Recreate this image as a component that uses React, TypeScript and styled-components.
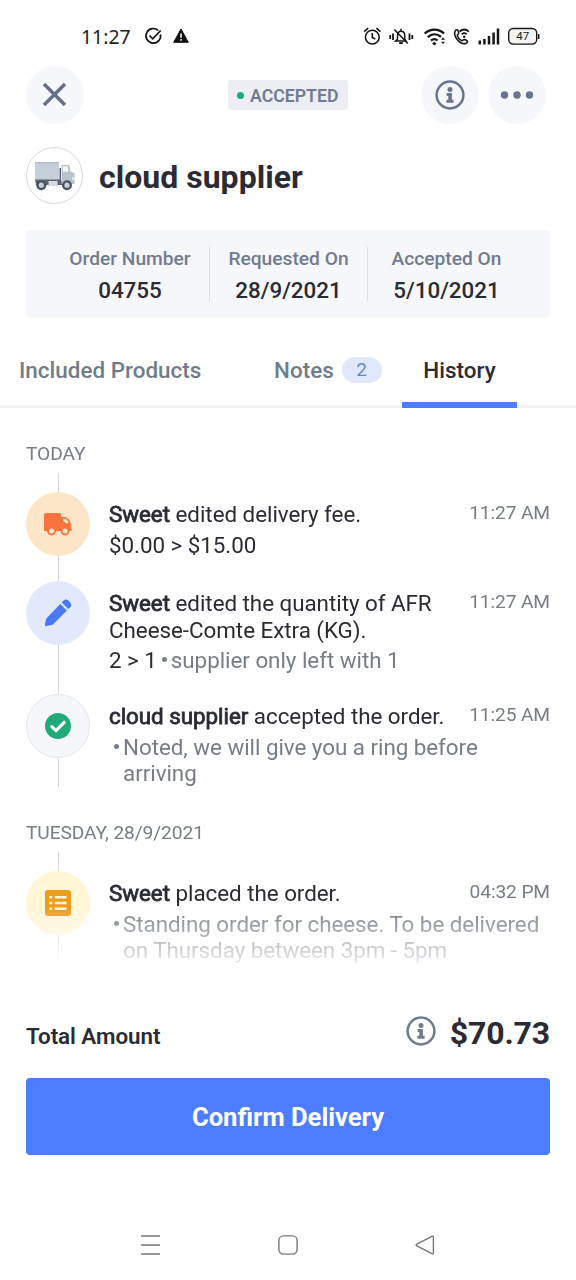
import React from 'react';
import styled, { createGlobalStyle } from 'styled-components';

const GlobalStyle = createGlobalStyle`
  * { box-sizing: border-box; }
  body {
    margin: 0;
    background: #fff;
    font-family: Roboto, "Liberation Sans", sans-serif;
    color: #2a2b35;
  }
  svg { display: block; flex: none; }
`;

const Screen = styled.div`
  width: 576px;
  height: 1280px;
  display: flex;
  flex-direction: column;
  background: #fff;
  overflow: hidden;
  white-space: nowrap;
`;

const StatusBar = styled.div`
  height: 66px;
  padding: 0 36px 0 81px;
  display: flex;
  align-items: flex-start;
  justify-content: space-between;
`;

const StatusGroup = styled.div`
  height: 72px;
  display: flex;
  align-items: center;
`;

const Clock = styled.span`
  font-family: "Noto Sans", sans-serif;
  font-size: 19.4px;
  color: #222;
  width: 63px;
`;

const Header = styled.header`
  height: 58px;
  padding: 0 30px 0 26px;
  display: grid;
  grid-template-columns: 1fr 120px 1fr;
  align-items: center;
`;

const HeaderActions = styled.div`
  display: flex;
  justify-content: flex-end;
  gap: 9px;
  margin-left: 20px;
`;

const RoundButton = styled.button`
  width: 58px;
  height: 58px;
  padding: 0 1px 1px 0;
  border: 0;
  border-radius: 50%;
  background: #f6f7fb;
  display: flex;
  align-items: center;
  justify-content: center;
`;

const StatusBadge = styled.div`
  width: 120px;
  height: 30px;
  margin-left: 2px;
  border-radius: 3px;
  background: #eceef3;
  color: #717b91;
  display: flex;
  align-items: center;
  padding: 1px 0 0 9px;
  font-size: 17.7px;
  font-weight: 600;
`;

const Dot = styled.span`
  width: 7px;
  height: 7px;
  border-radius: 50%;
  background: #1fa97c;
  margin-right: 6px;
`;

const Supplier = styled.div`
  margin-top: 23px;
  padding-left: 26px;
  display: flex;
  align-items: center;
  gap: 16px;
`;

const Avatar = styled.div`
  width: 57px;
  height: 57px;
  border: 1px solid #d8d8dc;
  border-radius: 50%;
  display: flex;
  align-items: center;
  justify-content: center;
`;

const SupplierName = styled.h1`
  margin: 2px 0 0;
  font-size: 32px;
  line-height: 40px;
  font-weight: 700;
  letter-spacing: 0.02px;
`;

const Summary = styled.div`
  margin: 26px 26px 0;
  height: 88px;
  padding: 17px 25px;
  border-radius: 4px;
  background: #f5f7fa;
  display: grid;
  grid-template-columns: repeat(3, 1fr);
`;

const SummaryCell = styled.div`
  height: 54px;
  display: flex;
  flex-direction: column;
  align-items: center;
  & + & { border-left: 1px solid #dcdfe6; }
`;

const SummaryLabel = styled.span`
  font-size: 19.2px;
  line-height: 23px;
  font-weight: 500;
  color: #727b8f;
`;

const SummaryValue = styled.span`
  margin-top: 6px;
  font-size: 22.4px;
  line-height: 28px;
  font-weight: 500;
`;

const Tabs = styled.nav`
  height: 90px;
  display: flex;
  align-items: flex-end;
  padding-left: 19px;
  box-shadow: inset 0 -3px #f3f4f6;
`;

const Tab = styled.div<{ $width: number; $active?: boolean }>`
  width: ${(p) => p.$width}px;
  height: 77px;
  display: flex;
  align-items: center;
  justify-content: ${(p) => (p.$active ? 'center' : 'flex-start')};
  padding-top: ${(p) => (p.$active ? 6 : 0)}px;
  border-bottom: ${(p) => (p.$active ? '6px solid #4c7dfb' : '0')};
  font-size: 22.4px;
  font-weight: 500;
  letter-spacing: 0.03px;
  color: ${(p) => (p.$active ? '#2a2b35' : '#717c8b')};
`;

const Count = styled.span`
  width: 40px;
  height: 26px;
  margin-left: 8px;
  border-radius: 13px;
  background: #e1e8fc;
  color: #6389d0;
  font-size: 19.2px;
  font-weight: 400;
  display: flex;
  align-items: center;
  justify-content: center;
`;

const History = styled.main`
  height: 557px;
  padding: 34px 26px 0;
  overflow: hidden;
  mask-image: linear-gradient(#000 500px, transparent 566px);
`;

const DayLabel = styled.div`
  height: 31px;
  line-height: 24px;
  font-size: 19.2px;
  letter-spacing: -0.1px;
  color: #777d88;
`;

const Timeline = styled.div`
  padding-top: 19px;
  margin-bottom: 34px;
  background: linear-gradient(#d6d9df, #d6d9df) 32px 0 / 1px 100% no-repeat;
`;

const Entry = styled.div<{ $height: number }>`
  height: ${(p) => p.$height}px;
  display: flex;
  gap: 19px;
`;

const EntryIcon = styled.div<{ $bg: string; $border?: string }>`
  flex: none;
  width: 64px;
  height: 64px;
  padding-right: 1px;
  border-radius: 50%;
  background: ${(p) => p.$bg};
  border: 1px solid ${(p) => p.$border ?? p.$bg};
  display: flex;
  align-items: center;
  justify-content: center;
`;

const EntryBody = styled.div`
  flex: 1;
  padding-top: 9.4px;
  font-size: 22.4px;
  line-height: 26.3px;
  letter-spacing: -0.04px;
`;

const EntryHead = styled.div`
  display: flex;
  justify-content: space-between;
`;

const Actor = styled.span`
  -webkit-text-stroke: 0.8px currentColor;
`;

const Time = styled.time`
  font-size: 19.2px;
  line-height: 23px;
  letter-spacing: -0.12px;
  color: #777d88;
`;

const Detail = styled.div`
  margin-top: 4px;
  display: flex;
  align-items: flex-start;
`;

const Comment = styled.span`
  color: #777d88;
  display: flex;
  &::before {
    content: "";
    width: 5px;
    height: 5px;
    margin: 10px 4px 0 5px;
    border-radius: 50%;
    background: #777d88;
  }
`;

const Total = styled.div`
  height: 113px;
  padding: 45px 26px 0;
  display: flex;
  align-items: flex-start;
`;

const TotalLabel = styled.span`
  flex: 1;
  margin-top: 12px;
  font-size: 22.4px;
  line-height: 28px;
  font-weight: 600;
  letter-spacing: -0.05px;
`;

const TotalValue = styled.span`
  margin: 3px 0 0 14px;
  font-size: 32px;
  line-height: 40px;
  font-weight: 700;
  letter-spacing: -0.15px;
`;

const InfoSlot = styled.span`
  margin-top: 6px;
`;

const Confirm = styled.button`
  margin: 0 26px;
  height: 77px;
  border: 0;
  border-radius: 4px;
  background: #4c7dfe;
  color: #fff;
  font: 700 25.6px Roboto, "Liberation Sans", sans-serif;
`;

const SystemNav = styled.div`
  margin-top: 75px;
  padding: 0 141px 0 140px;
  height: 30px;
  display: flex;
  align-items: center;
  justify-content: space-between;
`;

const InfoIcon = ({ color }: { color: string }) => (
  <svg width="30" height="30" viewBox="0 0 30 30">
    <circle cx="15" cy="15" r="13.4" fill="none" stroke={color} strokeWidth="2.5" />
    <circle cx="15" cy="9.4" r="2.5" fill={color} />
    <path d="M11.6 13h5.3v6.800h1.700v2.900h-7.200v-2.900h1.900v-3.900h-1.700z" fill={color} />
  </svg>
);

const StatusLeftIcons = () => (
  <svg width="48" height="20" viewBox="0 0 48 20" fill="none" stroke="#111" strokeWidth="1.7">
    <path d="M14.3 4.5A7.3 7.3 0 1 0 16.500 8.500" />
    <path d="M5.500 9.500l3.200 3.300 8-8.300" />
    <path d="M37 3l7.300 13.300H29.700z" fill="#111" stroke="#111" strokeWidth="1" strokeLinejoin="round" />
    <path d="M37 7.400v4.300M37 13v1.800" stroke="#fff" strokeWidth="1.500" />
  </svg>
);

const StatusRightIcons = () => (
  <svg width="178" height="24" viewBox="362 24.500 178 24" fill="none" stroke="#161616" strokeWidth="1.600">
    <circle cx="372.300" cy="37.600" r="6.900" />
    <path d="M372.300 33.500v4.500l3 1.500M364.200 32.200l4-3.600M380.400 32.200l-4-3.600" />
    <path d="M390.200 35.500v4M393 34v6.500M409.500 34v6.500M412.300 35.500v4" strokeWidth="1.800" />
    <path d="M395.500 41.500h10.500l-1.300-2.200v-3.200c0-5.800-7.200-5.800-7.200 0v3.600zM401 29.300v2.200M394.300 30l13.500 14" strokeWidth="1.500" />
    <path d="M399.200 43.600h3.600" strokeWidth="2" />
    <path d="M424.700 34c5.800-5.200 13.700-5.200 19.400 0M427.800 37.600c4-3.500 9.300-3.500 13.200-.2M431 41c2.200-1.800 4.500-1.800 6.600 0" strokeWidth="2.300" />
    <path d="M434.300 42.200l2.200 1.700-2.200 2.100-2.200-2.100z" fill="#161616" stroke="none" />
    <path d="M441 40.200l2-2.400 2 2.400zM441 42.200l2 2.400 2-2.400z" fill="#161616" stroke="none" />
    <path d="M455.200 31.400c1-1.500 2.500-1.500 3 .2l.5 2c.1 1-1.700 1.400-1.400 2.500.7 2.400 2.200 4 4.300 5 1.200.4 1.700-1.400 2.800-1.100l2 .7c1.500.6 1.200 2.100-.2 3-5.700 2.500-13.500-6.800-11-12.300z" strokeWidth="1.600" />
    <path d="M459.500 32.200c3-2.800 6.400-2.800 9.400 0M461.700 34.800c1.700-1.500 3.400-1.500 5 0" strokeWidth="1.700" />
    <circle cx="464.200" cy="37.200" r="1.200" fill="#161616" stroke="none" />
    <path d="M479.800 41v4M484.400 39.500v5.500M489 36.500v8.500M493.600 33v12M498 29v16" strokeWidth="2.500" />
    <rect x="508.700" y="29" width="28" height="15.600" rx="4.500" fill="#f5f5f5" strokeWidth="1.400" />
    <path d="M538.700 34.500v5" strokeWidth="1.500" />
    <text x="522.700" y="40.900" textAnchor="middle" fill="#222" stroke="none" fontSize="11.500" fontFamily="Roboto, sans-serif">47</text>
  </svg>
);

const TruckPicture = () => (
  <svg width="42" height="32" viewBox="0 0 42 32">
    <path d="M1 2h24v18H1z" fill="#c6cfd8" />
    <path d="M1 2h24v1.300H1z" fill="#b3bec8" />
    <path d="M1 19.500h24.500V8H27v13h3v4H2z" fill="#596371" />
    <path d="M27.500 5h6.500c1 0 1.500.5 1.700 1.500l1 5 2.800 1.200c.7.300 1 .8 1 1.500V24h-13z" fill="#b8c3ce" />
    <path d="M28.800 6.200h4.900l.9 5.600h-5.800z" fill="#f2f5f8" />
    <path d="M14.500 21h9v5h-9z" fill="#d5dbe0" />
    <path d="M38 17h2.500v3H38z" fill="#e3e7eb" />
    <circle cx="7.300" cy="25.200" r="5" fill="#4b5562" />
    <circle cx="7.300" cy="25.200" r="2.600" fill="#c4ccd4" />
    <circle cx="33" cy="25.200" r="5" fill="#4b5562" />
    <circle cx="33" cy="25.200" r="2.600" fill="#c4ccd4" />
  </svg>
);

const VanIcon = () => (
  <svg width="30" height="24" viewBox="0 0 30 24">
    <path d="M3.200 1H16.500c1 0 1.700.6 1.700 1.500V5h3c2.800 0 4.200 1.400 5.300 3.600l1.100 2.600c.2.500.3.900.3 1.400v4.900h.9V19H1V3.200C1 1.800 1.800 1 3.200 1z" fill="#fa733e" />
    <path d="M19.800 6.800h1.700c1.700 0 2.500.8 3.200 2.200l.9 2-2 .5-3.800-2.700z" fill="#fde5c8" />
    <circle cx="8.500" cy="19" r="3.500" fill="#fde5c8" stroke="#fa733e" strokeWidth="1.900" />
    <circle cx="22" cy="19" r="3.500" fill="#fde5c8" stroke="#fa733e" strokeWidth="1.900" />
  </svg>
);

const PencilIcon = () => (
  <svg width="30" height="30" viewBox="0 0 30 30" fill="#4a79f2">
    <path d="M17.300 5.900l6.600 6.600L10.200 26.300c-.5.500-.9.700-1.500.8l-5.300 1c-1 .2-1.600-.4-1.400-1.400l1-5.300c.1-.6.400-1 .8-1.500z" />
    <path d="M18.700 4.500l1.900-1.900c1.500-1.500 3.300-1.500 4.800 0l1.800 1.800c1.500 1.500 1.500 3.300 0 4.800l-1.900 1.900z" />
  </svg>
);

const CheckIcon = () => (
  <svg width="26" height="26" viewBox="0 0 26 26">
    <circle cx="13" cy="13" r="13" fill="#1faa78" />
    <path d="M6.800 13.600l4.200 4 8.200-8.300" fill="none" stroke="#fff" strokeWidth="3.200" strokeLinecap="round" />
  </svg>
);

const ListIcon = () => (
  <svg width="26" height="26" viewBox="0 0 26 26">
    <rect width="26" height="26" rx="3" fill="#ee9d1b" />
    <path d="M4.300 7.300h3M9.800 7.300h11.700M4.300 13h3M9.800 13h11.700M4.300 18.700h3M9.800 18.700h11.700" stroke="#fff8df" strokeWidth="2.400" />
  </svg>
);

type EntryProps = {
  height: number;
  bg: string;
  border?: string;
  icon: React.ReactNode;
  actor: string;
  action: React.ReactNode;
  time: string;
  change?: string;
  comment?: React.ReactNode;
};

const HistoryEntry = ({ height, bg, border, icon, actor, action, time, change, comment }: EntryProps) => (
  <Entry $height={height}>
    <EntryIcon $bg={bg} $border={border}>{icon}</EntryIcon>
    <EntryBody>
      <EntryHead>
        <span><Actor>{actor}</Actor> {action}</span>
        <Time>{time}</Time>
      </EntryHead>
      <Detail>
        {change}
        {comment && <Comment><span>{comment}</span></Comment>}
      </Detail>
    </EntryBody>
  </Entry>
);

const summary = [
  ['Order Number', '04755'],
  ['Requested On', '28/9/2021'],
  ['Accepted On', '5/10/2021'],
];

export default function App() {
  return (
    <Screen>
      <GlobalStyle />
      <StatusBar>
        <StatusGroup>
          <Clock>11:27</Clock>
          <StatusLeftIcons />
        </StatusGroup>
        <StatusGroup><StatusRightIcons /></StatusGroup>
      </StatusBar>
      <Header>
        <RoundButton aria-label="Close">
          <svg width="25" height="25" viewBox="0 0 25 25" stroke="#65718c" strokeWidth="3.500">
            <path d="M2 2l21 21M23 2L2 23" />
          </svg>
        </RoundButton>
        <StatusBadge><Dot />ACCEPTED</StatusBadge>
        <HeaderActions>
          <RoundButton aria-label="Details"><InfoIcon color="#69748f" /></RoundButton>
          <RoundButton aria-label="More">
            <svg width="34" height="8" viewBox="0 0 34 8" fill="#69748f">
              <circle cx="4.500" cy="4" r="3.700" />
              <circle cx="17" cy="4" r="3.700" />
              <circle cx="29.500" cy="4" r="3.700" />
            </svg>
          </RoundButton>
        </HeaderActions>
      </Header>
      <Supplier>
        <Avatar><TruckPicture /></Avatar>
        <SupplierName>cloud supplier</SupplierName>
      </Supplier>
      <Summary>
        {summary.map(([label, value]) => (
          <SummaryCell key={label}>
            <SummaryLabel>{label}</SummaryLabel>
            <SummaryValue>{value}</SummaryValue>
          </SummaryCell>
        ))}
      </Summary>
      <Tabs>
        <Tab $width={255}>Included Products</Tab>
        <Tab $width={128}>Notes<Count>2</Count></Tab>
        <Tab $width={115} $active>History</Tab>
      </Tabs>
      <History>
        <DayLabel>TODAY</DayLabel>
        <Timeline>
          <HistoryEntry height={89} bg="#fde5c8" icon={<VanIcon />} actor="Sweet" action="edited delivery fee." time="11:27 AM" change="$0.00 > $15.00" />
          <HistoryEntry height={113} bg="#e2e9fc" icon={<PencilIcon />} actor="Sweet" action={<>edited the quantity of AFR<br />Cheese-Comte Extra (KG).</>} time="11:27 AM" change="2 > 1" comment="supplier only left with 1" />
          <HistoryEntry height={93} bg="#f5f7fa" border="#e3e6ec" icon={<CheckIcon />} actor="cloud supplier" action="accepted the order." time="11:25 AM" comment={<>Noted, we will give you a ring before<br />arriving</>} />
        </Timeline>
        <DayLabel>TUESDAY, 28/9/2021</DayLabel>
        <Timeline>
          <HistoryEntry height={93} bg="#fff6d6" icon={<ListIcon />} actor="Sweet" action="placed the order." time="04:32 PM" comment={<>Standing order for cheese. To be delivered<br />on Thursday between 3pm - 5pm</>} />
        </Timeline>
      </History>
      <Total>
        <TotalLabel>Total Amount</TotalLabel>
        <InfoSlot><InfoIcon color="#717b8d" /></InfoSlot>
        <TotalValue>$70.73</TotalValue>
      </Total>
      <Confirm>Confirm Delivery</Confirm>
      <SystemNav>
        <svg width="21" height="22" viewBox="0 0 21 22" stroke="#777" strokeWidth="1.500">
          <path d="M1 2h19M1 11h19M1 20h19" />
        </svg>
        <svg width="20" height="20" viewBox="0 0 20 20" fill="none" stroke="#777" strokeWidth="1.400">
          <rect x=".9" y=".9" width="18.200" height="18.200" rx="4.500" />
        </svg>
        <svg width="20" height="20" viewBox="0 0 20 20" fill="none" stroke="#777" strokeWidth="1.400">
          <path d="M17 1.400L1.800 9.200q-1.300.8 0 1.600L17 18.600q1.400.6 1.400-1V2.400q0-1.600-1.400-1z" />
        </svg>
      </SystemNav>
    </Screen>
  );
}
